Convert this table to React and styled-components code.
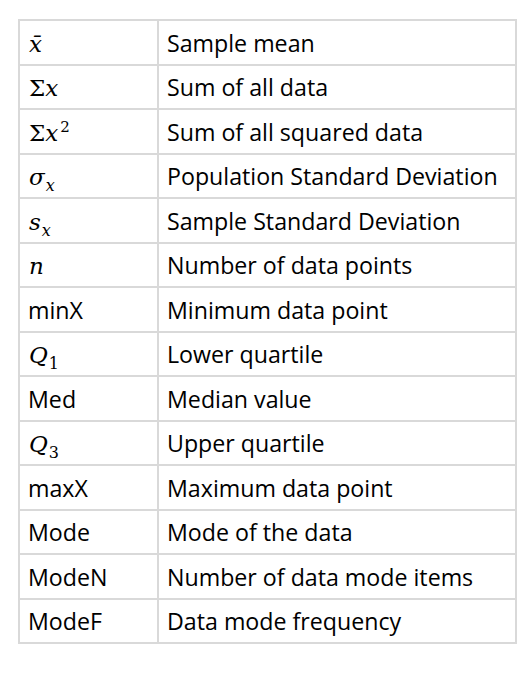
import React from 'react'
import styled, { createGlobalStyle } from 'styled-components'

const Global = createGlobalStyle`
  html, body {
    margin: 0;
    padding: 0;
    background: #ffffff;
  }
`

const Page = styled.div`
  padding: 19px 0 0 18px;
`

const Table = styled.table`
  border-collapse: collapse;
  width: 499px;
  table-layout: fixed;
  font-family: "Open Sans", Lato, sans-serif;
  color: #000;
`

const Row = styled.tr`
  height: 44.5px;
`

const Cell = styled.td`
  border: 2px solid #d9d9d9;
  padding: 1px 0 0 8px;
  font-size: 23.2px;
  line-height: normal;
  vertical-align: middle;
  white-space: nowrap;
  width: ${p => (p.$first ? '129px' : 'auto')};
`

const Math = styled.span`
  font-family: "DejaVu Serif", "Liberation Serif", serif;
  font-style: italic;
  font-size: 23px;
  padding-left: 1px;
`

const Upright = styled.span`
  font-style: normal;
`

const Sub = styled.span`
  font-size: 16px;
  vertical-align: -6px;
  line-height: 0;
  margin-left: 1px;
`

const Sup = styled.span`
  font-size: 15px;
  vertical-align: 9px;
  line-height: 0;
  font-style: normal;
  margin-left: 2px;
`

const rows = [
  [<Math>x̄</Math>, 'Sample mean'],
  [<Math><Upright>Σ</Upright>x</Math>, 'Sum of all data'],
  [<Math><Upright>Σ</Upright>x<Sup>2</Sup></Math>, 'Sum of all squared data'],
  [<Math>σ<Sub>x</Sub></Math>, 'Population Standard Deviation'],
  [<Math>s<Sub>x</Sub></Math>, 'Sample Standard Deviation'],
  [<Math>n</Math>, 'Number of data points'],
  ['minX', 'Minimum data point'],
  [<Math>Q<Sub><Upright>1</Upright></Sub></Math>, 'Lower quartile'],
  ['Med', 'Median value'],
  [<Math>Q<Sub><Upright>3</Upright></Sub></Math>, 'Upper quartile'],
  ['maxX', 'Maximum data point'],
  ['Mode', 'Mode of the data'],
  ['ModeN', 'Number of data mode items'],
  ['ModeF', 'Data mode frequency'],
]

export default function App() {
  return (
    <Page>
      <Global />
      <Table>
        <tbody>
          {rows.map(([sym, desc], i) => (
            <Row key={i}>
              <Cell $first>{sym}</Cell>
              <Cell>{desc}</Cell>
            </Row>
          ))}
        </tbody>
      </Table>
    </Page>
  )
}
